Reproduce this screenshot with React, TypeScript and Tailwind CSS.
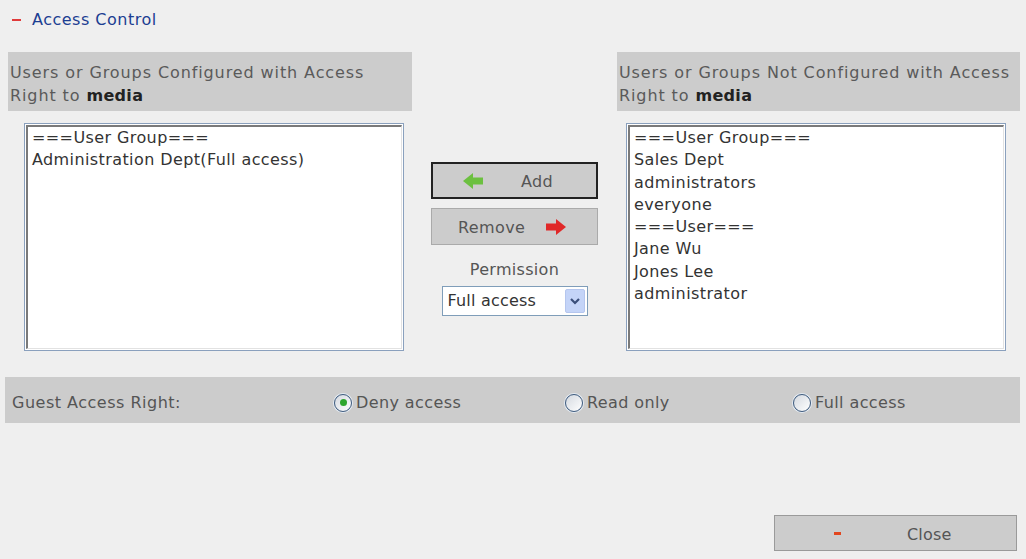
import React from "react";

const font = { fontFamily: '"DejaVu Sans", Verdana, sans-serif' };

function ListBox({ items }: { items: string[] }) {
  return (
    <div className="h-[228px] w-[380px] border border-[#8aa0bd] bg-white p-px">
      <div className="h-full border-l-2 border-t-2 border-[#7a7a7a] border-r border-b border-r-[#e2e2e2] border-b-[#e2e2e2] px-[4px]">
        {items.map((it, i) => (
          <div key={i} className="h-[22.3px] text-[16px] leading-[22px] tracking-[0.4px] text-[#333] whitespace-nowrap">
            {it}
          </div>
        ))}
      </div>
    </div>
  );
}

function Header({ text }: { text: string }) {
  return (
    <div className="h-[59px] bg-[#cccccc] px-[2px] pt-[9px] text-[16px] leading-[23px] tracking-[0.9px] text-[#5a5a5a]">
      {text}
      <br />
      Right to <b className="tracking-[0.3px] text-[#222]">media</b>
    </div>
  );
}

function Radio({ checked, label }: { checked?: boolean; label: string }) {
  return (
    <div className="flex items-center gap-[4px]">
      <span className="flex h-[18px] w-[18px] items-center justify-center rounded-full border border-[#3e5c80] bg-gradient-to-br from-[#d4d9e0] to-white shadow-[0_0_0_1px_#e4ebf3]">
        {checked && <span className="h-[7px] w-[7px] rounded-full bg-[#2ea62e]" />}
      </span>
      <span className="text-[16px] tracking-[0.4px] text-[#555]">{label}</span>
    </div>
  );
}

export default function App() {
  return (
    <div className="h-[559px] w-[1026px] overflow-hidden bg-[#efefef]" style={font}>
      <div className="flex items-center gap-[11px] pl-[12px] pt-[8px] text-[16px] leading-[24px] tracking-[0.5px]">
        <span className="h-[1.5px] w-[9px] bg-[#e03a3a]" />
        <span className="text-[#1c3e92]">Access Control</span>
      </div>

      <div className="mt-[20px] flex pl-[8px]">
        <div className="w-[404px]">
          <Header text="Users or Groups Configured with Access" />
          <div className="mt-[12px] pl-[16px]">
            <ListBox items={["===User Group===", "Administration Dept(Full access)"]} />
          </div>
        </div>

        <div className="flex w-[205px] flex-col items-center pt-[110px]">
          <button className="flex h-[37px] w-[167px] items-center border-2 border-[#222] bg-[#cccccc] pt-[3px] text-[16px] tracking-[0.4px] text-[#555]">
            <svg width="20" height="16" viewBox="0 0 20 16" className="ml-[30px] -mt-[3px]">
              <path d="M0 8 L10 0 L10 4.5 L20 4.5 L20 11.5 L10 11.5 L10 16 Z" fill="#6cc040" />
            </svg>
            <span className="ml-[38px]">Add</span>
          </button>
          <button className="mt-[9px] flex h-[37px] w-[167px] items-center border border-[#aaaaaa] bg-[#cccccc] pt-[3px] text-[16px] tracking-[0.4px] text-[#555]">
            <span className="ml-[26px]">Remove</span>
            <svg width="20" height="16" viewBox="0 0 20 16" className="ml-[21px] -mt-[3px]">
              <path d="M20 8 L10 0 L10 4.5 L0 4.5 L0 11.5 L10 11.5 L10 16 Z" fill="#e02828" />
            </svg>
          </button>
          <div className="mt-[14px] text-[16px] leading-[22px] tracking-[0.3px] text-[#555]">Permission</div>
          <div className="mt-[5px] flex h-[30px] w-[146px] items-center border border-[#7f9db9] bg-white">
            <span className="flex-1 pl-[5px] text-[16px] tracking-[0.2px] text-[#333]">Full access</span>
            <span className="mr-[2px] flex h-[24px] w-[20px] items-center justify-center rounded-[2px] border border-[#b5c6ee] bg-[#c4d4f8]">
              <svg width="10" height="7" viewBox="0 0 10 7">
                <path d="M1 1 L5 5 L9 1" stroke="#3a4e7a" strokeWidth="2.2" fill="none" />
              </svg>
            </span>
          </div>
        </div>

        <div className="w-[403px]">
          <Header text="Users or Groups Not Configured with Access" />
          <div className="mt-[12px] pl-[9px]">
            <ListBox
              items={[
                "===User Group===",
                "Sales Dept",
                "administrators",
                "everyone",
                "===User===",
                "Jane Wu",
                "Jones Lee",
                "administrator",
              ]}
            />
          </div>
        </div>
      </div>

      <div className="ml-[5px] mt-[26px] flex h-[46px] w-[1015px] items-center bg-[#cccccc] pt-[5px]">
        <span className="w-[329px] pl-[7px] text-[16px] tracking-[0.5px] text-[#555]">Guest Access Right:</span>
        <div className="w-[231px]">
          <Radio checked label="Deny access" />
        </div>
        <div className="w-[228px]">
          <Radio label="Read only" />
        </div>
        <Radio label="Full access" />
      </div>

      <div className="mt-[92px] flex justify-end pr-[9px]">
        <button className="flex h-[36px] w-[243px] items-center border border-[#9a9a9a] bg-[#cccccc] pt-[4px] text-[16px] tracking-[0.2px] text-[#555]">
          <span className="-mt-[4px] ml-[59px] h-[3px] w-[7px] bg-[#e2461e]" />
          <span className="ml-[66px]">Close</span>
        </button>
      </div>
    </div>
  );
}
